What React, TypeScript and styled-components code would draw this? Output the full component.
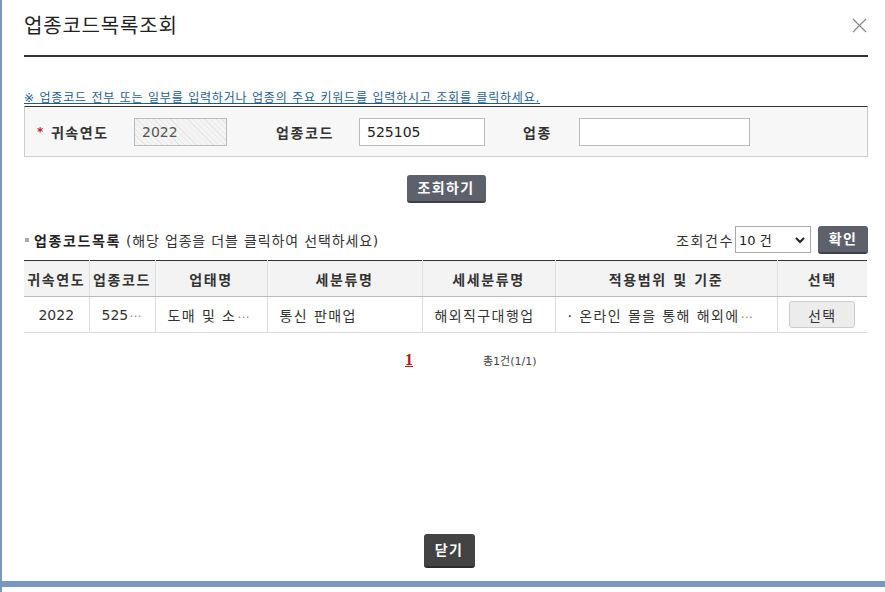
import React from "react";
import styled, { createGlobalStyle } from "styled-components";

const Global = createGlobalStyle`
  html, body { margin: 0; padding: 0; background: #fff; }
  body {
    font-family: "DejaVu Sans", "Noto Sans CJK KR", sans-serif;
    color: #333;
    letter-spacing: 0.1em;
  }
  * { box-sizing: border-box; }
`;

const Page = styled.div`
  width: 885px;
  height: 592px;
  display: flex;
  flex-direction: column;
  background: #fff;
  border-left: 2px solid #7a98bf;
  overflow: hidden;
`;

const Dialog = styled.div`
  flex: 1;
  display: flex;
  flex-direction: column;
  padding: 0 17px 13px 22px;
`;

const Header = styled.div`
  height: 57px;
  display: flex;
  align-items: center;
  justify-content: space-between;
  border-bottom: 2px solid #333;
  padding-bottom: 4px;
`;

const Title = styled.h1`
  margin: 0;
  font-size: 20px;
  font-weight: 400;
  color: #222;
  letter-spacing: 0.8px;
  line-height: 24px;
`;

const CloseBtn = styled.button`
  border: 0;
  background: transparent;
  padding: 0;
  margin: 0 1px 0 0;
  width: 16px;
  height: 16px;
  display: flex;
  align-items: center;
  justify-content: center;
  cursor: pointer;
`;

const Notice = styled.p`
  margin: 33px 0 0;
  font-size: 12px;
  line-height: 16px;
  color: #1d5d8c;
  text-decoration: underline;
  letter-spacing: 0.8px;
  white-space: nowrap;
`;

const SearchBox = styled.div`
  display: flex;
  align-items: center;
  height: 51px;
  border: 1px solid #ccc;
  border-top: 1px solid #333;
  background: #f7f7f7;
  padding-left: 12px;
`;

const Label = styled.span<{ $w: number }>`
  width: ${(p) => p.$w}px;
  font-size: 14px;
  font-weight: 700;
  color: #333;
  display: flex;
  align-items: center;
  white-space: nowrap;
`;

const Star = styled.span`
  color: #c4262d;
  font-size: 12px;
  margin-right: 6px;
`;

const Field = styled.div<{ $w: number; $disabled?: boolean; $mr?: number }>`
  width: ${(p) => p.$w}px;
  height: 28px;
  margin-right: ${(p) => p.$mr ?? 0}px;
  border: 1px solid #bbb;
  background: ${(p) =>
    p.$disabled
      ? "repeating-linear-gradient(45deg, #f4f4f4 0px, #f4f4f4 3px, #e6e6e6 3px, #e6e6e6 4px)"
      : "#fff"};
  font-size: 14px;
  letter-spacing: 0;
  color: ${(p) => (p.$disabled ? "#555" : "#222")};
  padding: 0 7px;
  display: flex;
  align-items: center;
  line-height: 1;
`;

const Center = styled.div<{ $mt: number; $shift?: number }>`
  display: flex;
  justify-content: center;
  margin-top: ${(p) => p.$mt}px;
  padding-left: ${(p) => p.$shift ?? 0}px;
`;

const DarkButton = styled.button<{ $w: number; $h: number; $bg: string }>`
  width: ${(p) => p.$w}px;
  height: ${(p) => p.$h}px;
  background: ${(p) => p.$bg};
  border: 0;
  border-bottom: 2px solid rgba(0, 0, 0, 0.35);
  border-radius: 3px;
  color: #fff;
  font-family: inherit;
  font-size: 14px;
  font-weight: 700;
  letter-spacing: 0.1em;
  padding: 0;
  display: flex;
  align-items: center;
  justify-content: center;
  line-height: 1;
  cursor: pointer;
`;

const SectionRow = styled.div`
  margin-top: 23px;
  display: flex;
  align-items: center;
  justify-content: space-between;
  height: 27px;
`;

const SectionTitle = styled.div`
  display: flex;
  align-items: center;
  font-size: 14px;
  color: #333;
  white-space: nowrap;
`;

const Bullet = styled.span`
  width: 4px;
  height: 4px;
  background: #aaa;
  margin: 0 5px 0 1px;
`;

const Strong = styled.strong`
  font-weight: 700;
  color: #222;
  margin-right: 5px;
`;

const Hint = styled.span`
  letter-spacing: 0.06em;
`;

const Controls = styled.div`
  display: flex;
  align-items: center;
  font-size: 14px;
  color: #333;
`;

const SelectBox = styled.div`
  width: 76px;
  height: 27px;
  margin: 0 7px 0 1px;
  border: 1px solid #aaa;
  background: #fff;
  font-size: 13px;
  letter-spacing: 0;
  color: #222;
  display: flex;
  align-items: center;
  justify-content: space-between;
  padding: 0 4px 0 3px;
`;

const Table = styled.table`
  margin-top: 7px;
  width: 843px;
  border-collapse: collapse;
  table-layout: fixed;
  border-top: 1px solid #333;
`;

const Th = styled.th`
  height: 36px;
  background: #f3f3f3;
  border-bottom: 1px solid #bbb;
  border-left: 1px solid #ddd;
  font-size: 14px;
  font-weight: 700;
  color: #333;
  padding: 0;
  white-space: nowrap;
  overflow: hidden;
  &:first-child { border-left: 0; }
`;

const Td = styled.td<{ $center?: boolean; $num?: boolean; $bare?: boolean }>`
  height: 36px;
  border-bottom: 1px solid #ddd;
  border-left: 1px solid #ddd;
  font-size: 14px;
  letter-spacing: ${(p) => (p.$num ? "0" : "0.1em")};
  color: #333;
  padding: ${(p) => (p.$bare ? "0" : "0 12px")};
  text-align: ${(p) => (p.$center ? "center" : "left")};
  white-space: nowrap;
  overflow: hidden;
  &:first-child { border-left: 0; }
`;

const More = styled.span`
  color: #888;
  letter-spacing: 0;
  font-size: 12px;
  margin-left: 1px;
`;

const PickButton = styled.button`
  width: 66px;
  height: 27px;
  border: 1px solid #ccc;
  border-radius: 3px;
  background: #ececec;
  font-family: inherit;
  font-size: 14px;
  letter-spacing: 0.1em;
  color: #333;
  padding: 0;
  cursor: pointer;
`;

const Pager = styled.div`
  margin-top: 17px;
  height: 20px;
  display: flex;
  align-items: center;
  padding-left: 381px;
`;

const PageNum = styled.span`
  font-family: "Liberation Serif", serif;
  font-size: 16px;
  font-weight: 700;
  letter-spacing: 0;
  color: #b01c1c;
  text-decoration: underline;
  width: 78px;
`;

const Total = styled.span`
  font-size: 11px;
  letter-spacing: 0;
  color: #444;
`;

const Spacer = styled.div`
  flex: 1;
`;

const BottomBar = styled.div`
  height: 6px;
  background: #7a98bf;
  margin-bottom: 5px;
  margin-left: -2px;
`;

const cols = [65, 66, 112, 155, 133, 222, 90];
const heads = ["귀속연도", "업종코드", "업태명", "세분류명", "세세분류명", "적용범위 및 기준", "선택"];

export default function App() {
  return (
    <Page>
      <Global />
      <Dialog>
        <Header>
          <Title>업종코드목록조회</Title>
          <CloseBtn aria-label="닫기">
            <svg width="15" height="15" viewBox="0 0 15 15">
              <path d="M1 1 L14 14 M14 1 L1 14" stroke="#8a8a8a" strokeWidth="1.2" fill="none" />
            </svg>
          </CloseBtn>
        </Header>
        <Notice>※ 업종코드 전부 또는 일부를 입력하거나 업종의 주요 키워드를 입력하시고 조회를 클릭하세요.</Notice>
        <SearchBox>
          <Label $w={97}>
            <Star>*</Star>귀속연도
          </Label>
          <Field $w={93} $disabled $mr={49}>2022</Field>
          <Label $w={83}>업종코드</Label>
          <Field $w={126} $mr={38}>525105</Field>
          <Label $w={56}>업종</Label>
          <Field $w={171} />
        </SearchBox>
        <Center $mt={18}>
          <DarkButton $w={79} $h={28} $bg="#5c616b">조회하기</DarkButton>
        </Center>
        <SectionRow>
          <SectionTitle>
            <Bullet />
            <Strong>업종코드목록</Strong>
            <Hint>(해당 업종을 더블 클릭하여 선택하세요)</Hint>
          </SectionTitle>
          <Controls>
            조회건수
            <SelectBox>
              <span>10 건</span>
              <svg width="12" height="12" viewBox="0 0 12 12">
                <path d="M2 4 L6 8 L10 4" stroke="#222" strokeWidth="2" fill="none" />
              </svg>
            </SelectBox>
            <DarkButton $w={50} $h={28} $bg="#5c616b">확인</DarkButton>
          </Controls>
        </SectionRow>
        <Table>
          <colgroup>
            {cols.map((w, i) => (
              <col key={i} style={{ width: w }} />
            ))}
          </colgroup>
          <thead>
            <tr>
              {heads.map((h) => (
                <Th key={h}>{h}</Th>
              ))}
            </tr>
          </thead>
          <tbody>
            <tr>
              <Td $center $num>2022</Td>
              <Td $num title="525105">
                525<More>⋯</More>
              </Td>
              <Td title="도매 및 소매업">
                도매 및 소<More>⋯</More>
              </Td>
              <Td>통신 판매업</Td>
              <Td>해외직구대행업</Td>
              <Td>
                · 온라인 몰을 통해 해외에<More>⋯</More>
              </Td>
              <Td $center $bare>
                <PickButton>선택</PickButton>
              </Td>
            </tr>
          </tbody>
        </Table>
        <Pager>
          <PageNum>1</PageNum>
          <Total>총1건(1/1)</Total>
        </Pager>
        <Spacer />
        <Center $mt={0} $shift={6}>
          <DarkButton $w={51} $h={34} $bg="#434343">닫기</DarkButton>
        </Center>
      </Dialog>
      <BottomBar />
    </Page>
  );
}
